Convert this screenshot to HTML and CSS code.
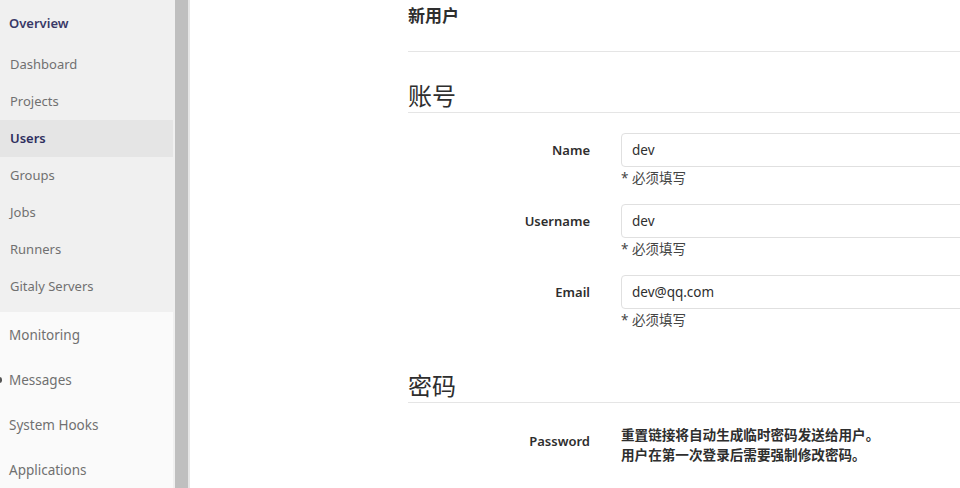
FILE: index.html
```html
<!DOCTYPE html>
<html lang="zh">
<head>
<meta charset="utf-8">
<title>新用户</title>
<link rel="stylesheet" href="styles.css">
</head>
<body>
<div class="layout">
  <aside class="sidebar">
    <nav class="nav-upper">
      <div class="nav-head">Overview</div>
      <a class="nav-item">Dashboard</a>
      <a class="nav-item">Projects</a>
      <a class="nav-item active">Users</a>
      <a class="nav-item">Groups</a>
      <a class="nav-item">Jobs</a>
      <a class="nav-item">Runners</a>
      <a class="nav-item">Gitaly Servers</a>
    </nav>
    <nav class="nav-lower">
      <a class="nav-big">Monitoring</a>
      <a class="nav-big has-icon"><span class="clip-icon"></span>Messages</a>
      <a class="nav-big">System Hooks</a>
      <a class="nav-big">Applications</a>
    </nav>
  </aside>
  <div class="scrollbar"></div>
  <main class="main">
    <div class="content">
      <h3 class="page-title">新用户</h3>
      <h4 class="section-title">账号</h4>
      <div class="form-group">
        <label class="control-label">Name</label>
        <div class="control">
          <div class="input">dev</div>
          <div class="help">* 必须填写</div>
        </div>
      </div>
      <div class="form-group">
        <label class="control-label">Username</label>
        <div class="control">
          <div class="input">dev</div>
          <div class="help">* 必须填写</div>
        </div>
      </div>
      <div class="form-group">
        <label class="control-label">Email</label>
        <div class="control">
          <div class="input">dev@qq.com</div>
          <div class="help">* 必须填写</div>
        </div>
      </div>
      <h4 class="section-title section-pw">密码</h4>
      <div class="form-group pw-row">
        <label class="control-label">Password</label>
        <div class="control">
          <div class="pw-text">重置链接将自动生成临时密码发送给用户。<br>用户在第一次登录后需要强制修改密码。</div>
        </div>
      </div>
    </div>
  </main>
</div>
</body>
</html>
```

FILE: styles.css
```css
* { box-sizing: border-box; }
html, body {
  margin: 0;
  padding: 0;
  background: #fff;
  height: 100%;
  overflow: hidden;
}
body {
  font-family: "Noto Sans", "Noto Sans CJK SC", sans-serif;
  font-size: 14px;
  color: #2e2e2e;
}
.layout {
  display: flex;
  height: 488px;
  overflow: hidden;
}
.sidebar {
  width: 175px;
  flex: none;
  background: #f0f0f0;
  display: flex;
  flex-direction: column;
}
.nav-upper {
  width: 173px;
  background: #f0f0f0;
  padding-top: 1px;
  padding-bottom: 7px;
}
.nav-head {
  height: 45px;
  line-height: 45px;
  padding-left: 9px;
  color: #393967;
  font-weight: 600;
  font-size: 13px;
}
.nav-item {
  display: block;
  height: 37px;
  line-height: 37px;
  padding-left: 10px;
  color: #707070;
  font-size: 13px;
}
.nav-item.active {
  background: #e5e5e5;
  color: #2e2e5e;
  font-weight: 600;
}
.nav-lower {
  width: 173px;
  flex: 1;
  background: #fafafa;
  padding-top: 1px;
}
.nav-big {
  display: block;
  position: relative;
  height: 45px;
  line-height: 44px;
  padding-left: 9px;
  color: #707070;
  font-size: 13.5px;
}
.clip-icon {
  position: absolute;
  left: -3px;
  top: 19px;
  width: 5px;
  height: 6px;
  border-radius: 3px;
  background: #555;
}
.scrollbar {
  width: 15px;
  flex: none;
  background: #bfbfbf;
  border-right: 2px solid #e6e6e6;
}
.main {
  flex: 1;
  overflow: hidden;
  padding-left: 218px;
}
.content {
  width: 700px;
}
.page-title {
  margin: 0;
  height: 52px;
  padding-top: 5px;
  line-height: 22px;
  font-size: 17px;
  font-weight: 700;
  color: #2e2e2e;
  border-bottom: 1px solid #e5e5e5;
}
.section-title {
  margin: 28px 0 20px;
  height: 33px;
  line-height: 32px;
  font-size: 24px;
  font-weight: 400;
  color: #2e2e2e;
  border-bottom: 1px solid #e5e5e5;
}
.section-pw {
  margin-top: 40px;
  margin-bottom: 22px;
}
.form-group {
  display: grid;
  grid-template-columns: 182px 1fr;
  column-gap: 31px;
  margin-bottom: 16px;
}
.control-label {
  text-align: right;
  padding-top: 7px;
  line-height: 20px;
  font-weight: 600;
  font-size: 13px;
  color: #2e2e2e;
}
.input {
  height: 34px;
  border: 1px solid #e0e0e0;
  border-radius: 4px;
  padding: 0 10px;
  line-height: 32px;
  font-size: 13.5px;
  color: #2e2e2e;
  background: #fff;
  width: 500px;
}
.help {
  margin-top: 1px;
  line-height: 20px;
  font-size: 13.5px;
  color: #444;
}
.pw-row .control-label {
  padding-top: 6px;
}
.pw-text {
  line-height: 20px;
  font-size: 13.6px;
  font-weight: 600;
  color: #2e2e2e;
}
```
